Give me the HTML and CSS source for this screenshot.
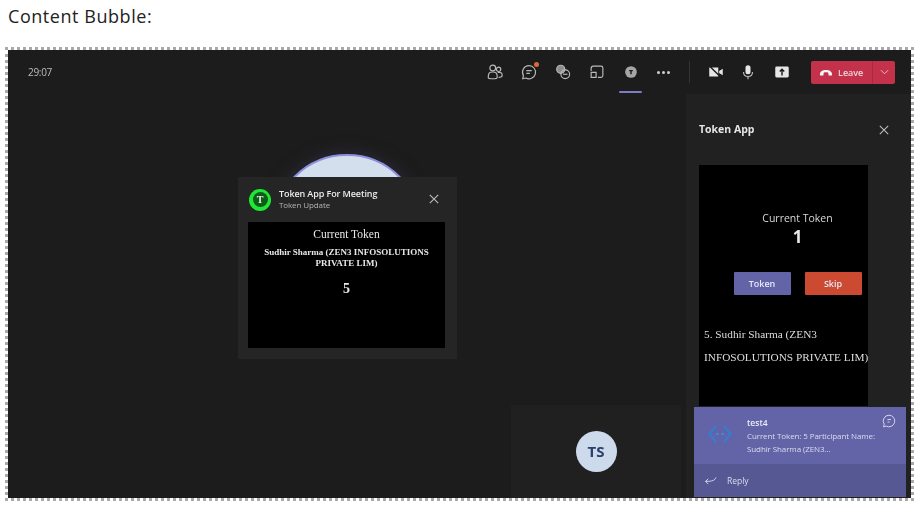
FILE: index.html
```html
<!DOCTYPE html>
<html lang="en">
<head>
<meta charset="utf-8">
<title>Content Bubble</title>
<link rel="stylesheet" href="styles.css">
</head>
<body>
<p class="caption">Content Bubble:</p>
<div class="frame">
  <div class="shot">
    <header class="topbar">
      <span class="timer">29:07</span>
      <nav class="tools">
        <svg class="tool" viewBox="0 0 20 20"><circle cx="7.500" cy="5.500" r="3.200"/><circle cx="14" cy="7" r="2.400"/><path d="M2.500 16c0-5 1-6 5-6s5 1 5 6c0 1-1 1.500-5 1.500S2.500 17 2.500 16zM13 10.500c3.500-.5 5 .5 5 3.500 0 1.500-1.500 2-4 2"/></svg>
        <span class="tool-wrap">
          <svg class="tool" viewBox="0 0 20 20"><path d="M10 3a7.300 7.300 0 1 1-3.500 13.700L3 17.500l.8-3.500A7.300 7.300 0 0 1 10 3zM7 8.500h6M7 11.500h4"/></svg>
          <i class="dot"></i>
        </span>
        <svg class="tool" viewBox="0 0 20 20"><circle cx="7.500" cy="7" r="4.500" class="filled-soft"/><circle cx="12.500" cy="12.500" r="4.800"/><path d="M10 12.500h5"/></svg>
        <svg class="tool" viewBox="0 0 20 20"><path d="M6 3.500h8.500a2 2 0 0 1 2 2V14a2 2 0 0 1-2 2H11M3.500 9V6a2.500 2.500 0 0 1 2.500-2.500M3.500 10.500H9V16H3.500z"/></svg>
        <span class="tool-wrap active">
          <svg class="tool" viewBox="0 0 20 20"><circle cx="10" cy="10" r="6.500" class="filled"/><path class="cut" d="M8 8.500h4M10 8.500v4"/></svg>
        </span>
        <span class="more"><i></i><i></i><i></i></span>
        <span class="divider"></span>
        <svg class="tool tool-cam" viewBox="0 0 20 20"><path class="filled" d="M2.500 5h10v10h-10zM13.500 9l4-2.500v7l-4-2.500z"/><path class="cut" d="M3 3.500l13 13"/></svg>
        <svg class="tool" viewBox="0 0 20 20"><rect class="filled" x="7.200" y="2.500" width="5.600" height="10" rx="2.800"/><path d="M5 10c0 3.500 2 5 5 5s5-1.500 5-5M10 15v3"/></svg>
        <svg class="tool" viewBox="0 0 20 20"><rect class="filled" x="2.500" y="4" width="15" height="12" rx="1.500"/><path class="cut" d="M10 14V7.500M7.500 9.500L10 7l2.500 2.500"/></svg>
        <div class="leave">
          <span class="leave-main">
            <svg class="hangup" viewBox="0 0 16 8"><path d="M1 6.500C1 2.500 4.500 1 8 1s7 1.500 7 5.500c0 .8-.6 1-1.200 1h-2c-.7 0-1-.4-1-1V5c0-.8-1-1.200-2.800-1.200S5.200 4.200 5.200 5v1.500c0 .6-.3 1-1 1h-2C1.600 7.500 1 7.300 1 6.500z"/></svg>
            Leave
          </span>
          <span class="leave-caret"><svg viewBox="0 0 10 6"><path d="M1 1l4 4 4-4"/></svg></span>
        </div>
      </nav>
    </header>
    <div class="workspace">
      <main class="stage">
        <div class="avatar-big"></div>
        <section class="popup">
          <div class="popup-head">
            <span class="app-logo"><b>T</b></span>
            <div class="popup-titles">
              <strong>Token App For Meeting</strong>
              <span>Token Update</span>
            </div>
            <svg class="close popup-close" viewBox="0 0 10 10"><path d="M.8.8l8.400 8.400M9.200.8L.8 9.200"/></svg>
          </div>
          <div class="popup-body">
            <h3>Current Token</h3>
            <p class="who">Sudhir Sharma (ZEN3 INFOSOLUTIONS PRIVATE LIM)</p>
            <p class="num">5</p>
          </div>
        </section>
        <div class="tile"><span class="ts">TS</span></div>
      </main>
      <aside class="side">
        <div class="side-head">
          <strong>Token App</strong>
          <svg class="close" viewBox="0 0 10 10"><path d="M.8.8l8.400 8.400M9.200.8L.8 9.200"/></svg>
        </div>
        <div class="side-panel">
          <div class="side-top">
            <div class="cur">Current Token</div>
            <div class="cur-num">1</div>
            <div class="btns">
              <span class="btn btn-token">Token</span>
              <span class="btn btn-skip">Skip</span>
            </div>
          </div>
          <p class="queue">5. Sudhir Sharma (ZEN3 INFOSOLUTIONS PRIVATE LIM)</p>
        </div>
        <div class="toast">
          <div class="toast-main">
            <svg class="toast-icon" viewBox="0 0 24 20"><path d="M8.500 1.500L1.500 10l7 8.500M15.500 1.500l7 8.500-7 8.500"/><circle cx="9.500" cy="10" r="1.300"/><circle cx="14.500" cy="10" r="1.300"/></svg>
            <div class="toast-text">
              <strong>test4</strong>
              <span>Current Token: 5 Participant Name: Sudhir Sharma (ZEN3...</span>
            </div>
            <svg class="toast-chat" viewBox="0 0 14 14"><path d="M7 1.200a5.800 5.800 0 1 1-2.800 10.900L1.500 12.800l.7-2.600A5.800 5.800 0 0 1 7 1.200zM5.500 5.500h3.500M5.500 8h2"/></svg>
          </div>
          <div class="toast-reply">
            <svg viewBox="0 0 14 10"><path d="M13 1.500C12 5 9 6 1.500 6M4.500 3L1.500 6l3 3"/></svg>
            <span>Reply</span>
          </div>
        </div>
      </aside>
    </div>
  </div>
</div>
</body>
</html>
```
FILE: styles.css
```css
* { box-sizing: border-box; }
html, body { margin: 0; padding: 0; background: #fff; }
body { width: 921px; height: 527px; overflow: hidden; font-family: "Open Sans", sans-serif; }

.caption {
  margin: 0;
  padding: 4px 0 0 8px;
  height: 47px;
  font-size: 18px;
  line-height: 24px;
  color: #222;
  letter-spacing: .55px;
}

.frame {
  width: 909px;
  height: 454px;
  margin-left: 5px;
  border: 3px dotted #a9a9a9;
}

.shot {
  height: 448px;
  background: #1e1e1e;
  display: flex;
  flex-direction: column;
  overflow: hidden;
  filter: blur(.55px);
  font-family: "Open Sans", sans-serif;
  color: #eee;
}

/* top bar */
.topbar {
  height: 44px;
  flex: none;
  display: flex;
  align-items: center;
  justify-content: space-between;
  padding: 0 16px 0 20px;
  background: #1c1c1c;
}
.timer { font-size: 10px; color: #bdbdbd; letter-spacing: -.3px; }
.tools { display: flex; align-items: center; }
.tools > svg.tool, .tool-wrap { margin-right: 16px; }
.tools > svg.tool-cam { margin-right: 14px; }
.tool {
  width: 18px;
  height: 18px;
  display: block;
  fill: none;
  stroke: #b9b9b9;
  stroke-width: 1.300;
}
.tool .filled { fill: #e6e6e6; stroke: none; }
.tool .filled-soft { fill: #8d8d8d; stroke: #b9b9b9; }
.tool .cut { stroke: #1c1c1c; stroke-width: 1.600; fill: none; }
.tool-wrap { position: relative; display: block; }
.dot {
  position: absolute;
  top: -1px;
  right: -1px;
  width: 5px;
  height: 5px;
  border-radius: 50%;
  background: #e2683b;
}
.tool-wrap.active .filled { fill: #a5a5a5; }
.tool-wrap.active::after {
  content: "";
  position: absolute;
  left: -3px;
  right: -2px;
  bottom: -12px;
  height: 2px;
  background: #7b7cc8;
  border-radius: 1px;
}
.more { display: flex; gap: 2px; width: 14px; margin: 0 15px 0 1px; }
.more i { width: 3px; height: 3px; border-radius: 50%; background: #cfcfcf; }
.divider { width: 1px; height: 22px; background: #333; margin: 0 17px 0 3px; }

.leave {
  width: 84px;
  height: 23px;
  margin-left: 4px;
  display: flex;
  background: #c4314b;
  border-radius: 2px;
  font-size: 9px;
  font-weight: 600;
  color: #f1d5da;
}
.leave-main { flex: 1; display: flex; align-items: center; gap: 5px; padding-left: 8px; }
.hangup { width: 14px; height: 7px; fill: #f5f5f5; }
.leave-caret { width: 23px; display: flex; align-items: center; justify-content: center; border-left: 1px solid #a92a41; }
.leave-caret svg { width: 9px; height: 6px; fill: none; stroke: #e8bcc4; stroke-width: 1.100; }

/* stage */
.workspace { flex: 1; display: flex; min-height: 0; }
.stage { position: relative; flex: 1; background: #1c1c1c; }
.avatar-big {
  position: absolute;
  left: 264px;
  top: 60px;
  width: 150px;
  height: 150px;
  border-radius: 50%;
  background: #d4dfee;
  border: 2px solid #8f90dd;
  box-shadow: 0 0 14px 4px #262630;
}
.popup {
  position: absolute;
  left: 230px;
  top: 83px;
  width: 219px;
  height: 182px;
  padding: 0 12px 0 10px;
  background: #252525;
}
.popup-head { height: 45px; display: flex; align-items: center; position: relative; }
.app-logo {
  width: 22px;
  height: 22px;
  margin-right: 8px;
  margin-left: 1px;
  border-radius: 50%;
  background: #1fe834;
  display: flex;
  align-items: center;
  justify-content: center;
}
.app-logo b {
  width: 15px;
  height: 15px;
  border-radius: 50%;
  background: #0e5c18;
  color: #e6f7e7;
  font: 700 10px/15px "Liberation Serif", serif;
  text-align: center;
}
.popup-titles { display: flex; flex-direction: column; margin-top: -2px; }
.popup-titles strong { font-size: 9px; font-weight: 600; line-height: 12px; color: #ececec; letter-spacing: -.1px; }
.popup-titles span { font-size: 8px; line-height: 10px; color: #b4b4b4; letter-spacing: -.1px; }
.close { width: 10px; height: 10px; fill: none; stroke: #bdbdbd; stroke-width: 1.100; }
.popup-close { position: absolute; right: 6px; top: 17px; }
.popup-body {
  height: 126px;
  background: #000;
  text-align: center;
  font-family: "Liberation Serif", serif;
  color: #e8e8e8;
  padding-top: 5px;
}
.popup-body h3 { margin: 0; font-size: 11.500px; line-height: 14px; font-weight: 400; }
.who { margin: 6px 8px 0; font-size: 9px; line-height: 10.500px; font-weight: 700; }
.num { margin: 13px 0 0; font-size: 14px; line-height: 16px; font-weight: 700; }

.tile {
  position: absolute;
  right: 5px;
  bottom: 0;
  width: 170px;
  height: 93px;
  background: #202020;
  display: flex;
  align-items: center;
  justify-content: center;
}
.ts {
  width: 41px;
  height: 41px;
  margin-bottom: 1px;
  border-radius: 50%;
  background: #cddaec;
  color: #28406b;
  font-size: 15px;
  font-weight: 700;
  line-height: 41px;
  text-align: center;
}

/* side panel */
.side {
  position: relative;
  width: 225px;
  flex: none;
  background: #212121;
  padding-left: 13px;
}
.side-head {
  height: 71px;
  display: flex;
  align-items: center;
  justify-content: space-between;
  padding: 0 22px 0 0;
}
.side-head strong { font-size: 10.500px; font-weight: 700; color: #e6e6e6; line-height: 12px; margin-top: -1px; }
.side-panel {
  width: 169px;
  height: 241px;
  background: #000;
  padding-top: 47px;
}
.side-top { padding-left: 28px; text-align: center; }
.cur { font-size: 10.500px; line-height: 12px; color: #d8d8d8; }
.cur-num { font-size: 17px; line-height: 26px; font-weight: 700; color: #e8e8e8; }
.btns { display: flex; justify-content: center; gap: 14px; margin-top: 22px; }
.btn {
  width: 57px;
  height: 23px;
  border-radius: 1px;
  font-size: 9px;
  font-weight: 600;
  line-height: 23px;
  color: #e8e8f4;
}
.btn-token { background: #6264a7; }
.btn-skip { background: #cc4a31; }
.queue {
  margin: 28px -8px 0 0;
  padding: 0 0 0 5px;
  font-family: "Liberation Serif", serif;
  font-size: 11.300px;
  line-height: 23px;
  color: #dedede;
}
.toast {
  position: absolute;
  left: 8px;
  bottom: 1px;
  width: 212px;
  height: 90px;
  background: #6264a7;
  display: flex;
  flex-direction: column;
}
.toast-main { flex: 1; display: flex; position: relative; padding: 10px 22px 0 53px; }
.toast-icon {
  position: absolute;
  left: 14px;
  top: 17px;
  width: 24px;
  height: 20px;
  fill: none;
  stroke: #2f80d8;
  stroke-width: 1.900;
}
.toast-icon circle { fill: #3a8ce0; stroke: none; }
.toast-text { display: flex; flex-direction: column; color: #dcdcf0; }
.toast-text strong { font-size: 8.500px; line-height: 12px; font-weight: 600; color: #ececf8; }
.toast-text span { font-size: 8px; line-height: 13px; letter-spacing: -.1px; }
.toast-chat {
  position: absolute;
  right: 10px;
  top: 7px;
  width: 14px;
  height: 14px;
  fill: none;
  stroke: #d5d5ec;
  stroke-width: 1;
}
.toast-reply {
  height: 33px;
  flex: none;
  background: #565894;
  display: flex;
  align-items: center;
  gap: 10px;
  padding-left: 10px;
  font-size: 8.500px;
  font-weight: 500;
  color: #dcdcf0;
}
.toast-reply svg { width: 13px; height: 9px; fill: none; stroke: #dcdcf0; stroke-width: 1; }
```
